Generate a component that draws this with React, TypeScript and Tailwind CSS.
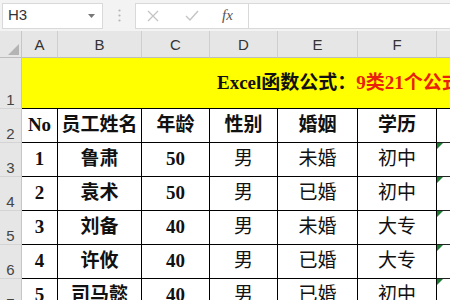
import React from "react";

const cols = ["A", "B", "C", "D", "E", "F", "G"];

const rows = [
  ["1", "鲁肃", "50", "男", "未婚", "初中"],
  ["2", "袁术", "50", "男", "已婚", "初中"],
  ["3", "刘备", "40", "男", "未婚", "大专"],
  ["4", "许攸", "40", "男", "已婚", "大专"],
  ["5", "司马懿", "40", "男", "已婚", "初中"],
];

const headers = ["No", "员工姓名", "年龄", "性别", "婚姻", "学历"];

const cellFont = { fontFamily: '"Liberation Serif", "Noto Sans CJK SC", serif' };

function RowHead({ n, h }: { n: number; h: string }) {
  return (
    <div
      className={`${h} flex items-end justify-center pb-[1px] bg-[#e6e6e6] border-r border-b border-r-[#c6c6c6] border-b-[#d4d4d4] text-[15px] text-[#444] leading-none`}
    >
      {n}
    </div>
  );
}

export default function App() {
  return (
    <div
      className="w-[450px] h-[300px] overflow-hidden bg-white"
      style={{ fontFamily: '"Liberation Sans", "Noto Sans CJK SC", sans-serif' }}
    >
      {/* formula bar */}
      <div className="h-[31px] bg-[#f3f3f3] flex items-center gap-0">
        <div className="ml-[2px] w-[101px] h-[26px] bg-white border border-[#d9d9d9] flex items-center justify-between pl-[5px] pr-[7px]">
          <span className="text-[15px] text-[#333]">H3</span>
          <svg width="7" height="4" viewBox="0 0 7 4">
            <path d="M0 0 L7 0 L3.5 4 Z" fill="#777" />
          </svg>
        </div>
        <div className="w-[32px] flex justify-center">
          <svg width="3" height="13" viewBox="0 0 3 13">
            <circle cx="1.5" cy="1.5" r="1.1" fill="#b5b5b5" />
            <circle cx="1.5" cy="6.5" r="1.1" fill="#b5b5b5" />
            <circle cx="1.5" cy="11.5" r="1.1" fill="#b5b5b5" />
          </svg>
        </div>
        <div className="flex-1 h-[26px] bg-white border border-[#d9d9d9] border-r-0 flex items-center">
          <div className="w-[112px] flex items-center h-full">
            <svg className="ml-[11px]" width="12" height="12" viewBox="0 0 12 12">
              <path d="M1 1 L11 11 M11 1 L1 11" stroke="#c4c4c4" strokeWidth="1.3" />
            </svg>
            <svg className="ml-[26px]" width="14" height="12" viewBox="0 0 14 12">
              <path d="M1 6 L5 10 L13 1" stroke="#c4c4c4" strokeWidth="1.4" fill="none" />
            </svg>
            <span
              className="ml-[23px] text-[15px] italic text-[#555]"
              style={{ fontFamily: '"Liberation Serif", serif' }}
            >
              fx
            </span>
          </div>
          <div className="w-px h-full bg-[#d9d9d9]" />
        </div>
      </div>

      {/* sheet */}
      <div className="grid grid-cols-[22px_36px_84px_68px_68px_80px_79px_79px] w-max">
        {/* column headers */}
        <div className="h-[27px] bg-[#e6e6e6] border-r border-b border-r-[#c6c6c6] border-b-[#bdbdbd] flex items-end justify-end p-[2px]">
          <svg width="11" height="11" viewBox="0 0 11 11">
            <path d="M11 0 L11 11 L0 11 Z" fill="#b4b4b4" />
          </svg>
        </div>
        {cols.map((c) => (
          <div
            key={c}
            className="h-[27px] bg-[#e6e6e6] border-r border-b border-r-[#cfcfcf] border-b-[#bdbdbd] flex items-center justify-center pt-[3px] text-[15px] text-[#333]"
          >
            {c}
          </div>
        ))}

        {/* row 1 */}
        <RowHead n={1} h="h-[51px]" />
        <div
          className="col-span-7 h-[51px] bg-[#ffff00] border-b border-black flex items-center pl-[195px] whitespace-nowrap overflow-hidden text-[19px] font-bold"
          style={cellFont}
        >
          <span className="text-[#111]">Excel函数公式：</span>
          <span className="text-[#e8200c]">9类21个公式，职场必备</span>
        </div>

        {/* row 2 */}
        <RowHead n={2} h="h-[34px]" />
        {headers.map((t) => (
          <div
            key={t}
            className="h-[34px] border-r border-b border-black flex items-center justify-center text-[19px] font-bold text-[#111] whitespace-nowrap"
            style={cellFont}
          >
            {t}
          </div>
        ))}
        <div className="h-[34px] border-b border-[#222]" />

        {/* data rows */}
        {rows.map((r, i) => (
          <React.Fragment key={i}>
            <RowHead n={i + 3} h="h-[34px]" />
            {r.map((v, j) => (
              <div
                key={j}
                className={`h-[34px] border-r border-b border-black flex items-center justify-center text-[19px] text-[#111] whitespace-nowrap ${
                  j < 3 ? "font-bold" : "font-normal"
                }`}
                style={cellFont}
              >
                {v}
              </div>
            ))}
            <div className="h-[34px] border-b border-[#222] relative">
              <div className="absolute top-0 left-0 w-0 h-0 border-t-[6px] border-r-[6px] border-t-[#1e7b34] border-r-transparent" />
            </div>
          </React.Fragment>
        ))}
      </div>
    </div>
  );
}
